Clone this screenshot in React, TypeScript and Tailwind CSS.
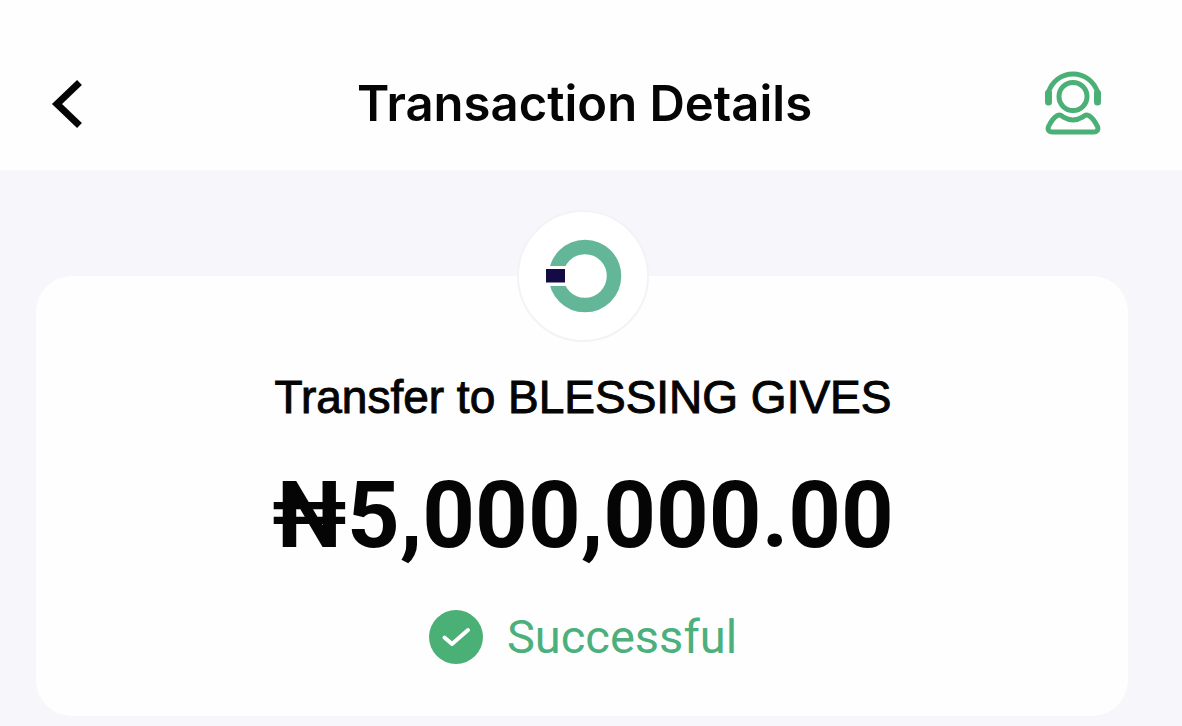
function BackButton() {
  return (
    <button type="button" aria-label="Back" className="flex h-16 w-20 items-center justify-start">
      <svg width="32" height="50" viewBox="0 0 32 50" fill="none" stroke="#050505" strokeWidth="7">
        <path d="M29.500 3.500 7 25l22.500 21.500" />
      </svg>
    </button>
  );
}

function SupportButton() {
  return (
    <button type="button" aria-label="Customer support" className="flex h-16 w-16 items-center justify-end">
      <svg width="60" height="66" viewBox="0 0 60 66" fill="none" stroke="#4bb075" strokeWidth="5" strokeLinejoin="round">
        <circle cx="30" cy="25.500" r="14" />
        <path d="M5.500 21.500C8.500 10.500 18.500 3 30 3s21.500 7.500 24.500 18.500" />
        <path d="M5.500 22v9M54.500 22v9" strokeWidth="7" strokeLinecap="round" />
        <path d="M14.500 44.500C18 43 18.500 45 20.500 46.200c6 3.600 13 3.600 19 0C41.500 45 42 43 45.500 44.500 49.500 46.500 52 50.500 54.500 55.500c1.300 3.500-.8 5.500-4 5.500H9.500c-3.200 0-5.300-2-4-5.500 2.500-5 5-9 9-11Z" />
      </svg>
    </button>
  );
}

function MerchantLogo() {
  return (
    <div className="flex h-[132px] w-[132px] items-center justify-center rounded-full border-2 border-[#f3f3f7] bg-white">
      <svg width="80" height="76" viewBox="0 0 80 76" fill="none">
        <circle cx="42" cy="38" r="29" stroke="#63b798" strokeWidth="14.500" />
        <path d="M0 28h25v20H0Z" fill="#fff" />
        <path d="M3 31h19v13.500H3Z" fill="#140b45" />
      </svg>
    </div>
  );
}

function CheckBadge() {
  return (
    <svg width="54" height="54" viewBox="0 0 54 54" fill="none" aria-hidden="true">
      <circle cx="27" cy="27" r="27" fill="#4bb075" />
      <path d="m15.500 27.500 7.500 6.500 16-14" stroke="#fff" strokeWidth="4" strokeLinecap="round" strokeLinejoin="round" />
    </svg>
  );
}

export default function App() {
  return (
    <div className="min-h-screen bg-[#f6f6fb] text-[#050505]">
      <header className="flex items-center justify-between bg-[#fefefe] pt-[72px] pr-[79px] pb-[34px] pl-[50px]">
        <BackButton />
        <h1 className="font-['Inter',sans-serif] text-[49px] leading-[64px] font-semibold whitespace-nowrap">
          Transaction Details
        </h1>
        <SupportButton />
      </header>
      <main className="pt-[106px] pr-[54px] pb-[10px] pl-9">
        <section className="flex flex-col items-center rounded-[36px] bg-[#fefefe] pb-[52px] pl-[2px]">
          <div className="-mt-[66px]">
            <MerchantLogo />
          </div>
          <h2 className="mt-[27px] font-['Liberation_Sans',sans-serif] text-[46px] leading-[56px] whitespace-nowrap [-webkit-text-stroke:1px_#050505]">
            Transfer to BLESSING GIVES
          </h2>
          <p className="mt-9 font-['Roboto',sans-serif] text-[92px] leading-[110px] font-bold whitespace-nowrap">
            ₦5,000,000.00
          </p>
          <div className="mt-[39px] flex items-center gap-6">
            <CheckBadge />
            <span className="font-['Roboto',sans-serif] text-[47px] leading-[54px] text-[#4bb07c]">Successful</span>
          </div>
        </section>
      </main>
    </div>
  );
}
